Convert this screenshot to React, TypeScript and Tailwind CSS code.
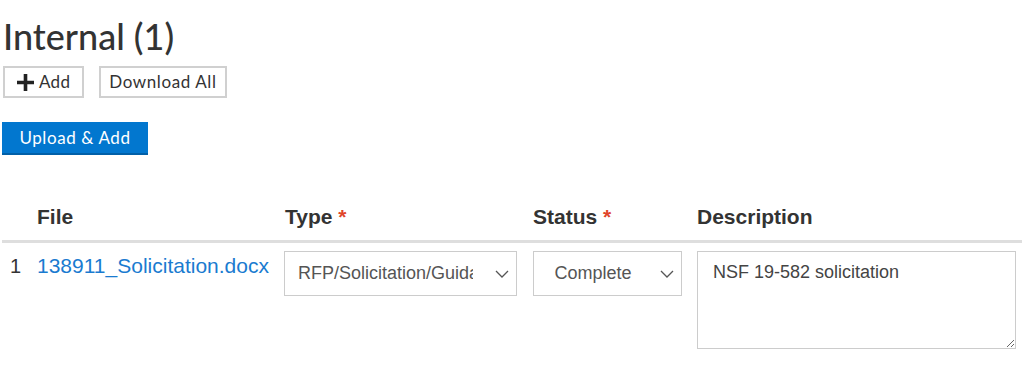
const raleway = { fontFamily: "Lato, 'Open Sans', sans-serif" };

function Chevron() {
  return (
    <svg width="14" height="8" viewBox="0 0 14 8" className="flex-shrink-0">
      <polyline points="1,1 7,7 13,1" fill="none" stroke="#555" strokeWidth="1.3" />
    </svg>
  );
}

function Select({ value, width, center }: { value: string; width: string; center?: boolean }) {
  return (
    <div
      className={`${width} h-[45px] border border-[#ccc] bg-white flex items-center pl-[13px] pr-[7px] text-[18px] text-[#555]`}
    >
      <span
        className={`flex-1 overflow-hidden whitespace-nowrap ${center ? "text-center mr-[21px]" : "mr-[22px]"}`}
      >
        {value}
      </span>
      <Chevron />
    </div>
  );
}

export default function App() {
  return (
    <div className="w-[1024px] h-[381px] bg-white overflow-hidden font-['Liberation_Sans',Arial,sans-serif]">
      <h2 className="pl-[3px] pt-[14px] text-[36px] leading-[44px] text-[#333] font-medium" style={raleway}>
        Internal (1)
      </h2>

      <div className="flex gap-[15px] pl-[3px] mt-[8px]">
        <button
          className="h-[32px] px-[12px] border-2 border-[#d0d0d0] bg-white flex items-center gap-[5px] text-[17px] text-[#333] tracking-[0.3px]"
          style={raleway}
        >
          <svg width="17" height="17" viewBox="0 0 16 16" className="fill-[#222]">
            <path d="M6.3 0h3.4v6.3H16v3.4H9.7V16H6.3V9.7H0V6.3h6.3z" />
          </svg>
          Add
        </button>
        <button
          className="h-[32px] px-[8px] border-2 border-[#d0d0d0] bg-white flex items-center text-[17px] text-[#333] tracking-[0.6px]"
          style={raleway}
        >
          Download All
        </button>
      </div>

      <div className="pl-[2px] mt-[24px]">
        <button
          className="h-[33px] w-[146px] bg-[#0277cf] border-b-2 border-[#0160a8] text-white text-[17px] tracking-[0.6px] flex items-center justify-center"
          style={raleway}
        >
          Upload &amp; Add
        </button>
      </div>

      <div className="mx-[2px] mt-[46px]">
        <div className="grid grid-cols-[35px_248px_248px_164px_1fr] text-[21px] leading-[31px] font-bold text-[#333] border-b-[3px] border-[#dedede] pb-[8px]">
          <div />
          <div>File</div>
          <div>
            Type <span className="text-[#e0452a]">*</span>
          </div>
          <div>
            Status <span className="text-[#e0452a]">*</span>
          </div>
          <div>Description</div>
        </div>

        <div className="grid grid-cols-[35px_248px_248px_164px_1fr] pt-[8px]">
          <div className="pl-[8px] text-[20px] leading-[30px] text-[#333]">1</div>
          <div className="text-[21px] leading-[30px]">
            <a className="text-[#1a7bd0]">138911_Solicitation.docx</a>
          </div>
          <div className="-ml-[1px]">
            <Select value="RFP/Solicitation/Guidance" width="w-[233px]" />
          </div>
          <div>
            <Select value="Complete" width="w-[149px]" center />
          </div>
          <div className="pr-[6px]">
            <textarea
              readOnly
              defaultValue="NSF 19-582 solicitation"
              className="block w-[319px] h-[98px] border border-[#ccc] px-[15px] py-[7px] text-[18px] text-[#444] resize-y outline-none"
            />
          </div>
        </div>
      </div>
    </div>
  );
}
